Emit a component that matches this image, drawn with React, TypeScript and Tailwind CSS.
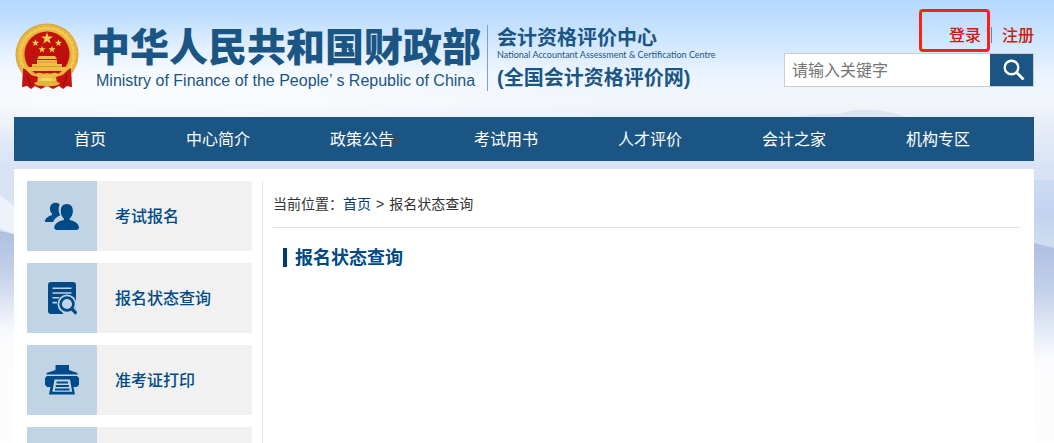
import type { ReactNode } from 'react';

const navItems = ['首页', '中心简介', '政策公告', '考试用书', '人才评价', '会计之家', '机构专区'];

const starPoints = (cx: number, cy: number, r: number) =>
  Array.from({ length: 10 }, (_, i) => {
    const radius = i % 2 ? r * 0.4 : r;
    const a = (Math.PI / 5) * i - Math.PI / 2;
    return `${(cx + radius * Math.cos(a)).toFixed(2)},${(cy + radius * Math.sin(a)).toFixed(2)}`;
  }).join(' ');

function Emblem() {
  return (
    <svg viewBox="0 0 64 68" className="ml-px h-[68px] w-16 shrink-0" aria-hidden="true">
      <defs>
        <radialGradient id="gold" cx="50%" cy="50%" r="50%">
          <stop offset="0.72" stopColor="#e0a62c" />
          <stop offset="0.86" stopColor="#f3cd58" />
          <stop offset="1" stopColor="#d9a235" />
        </radialGradient>
        <linearGradient id="red" x1="0" y1="0" x2="1" y2="1">
          <stop offset="0" stopColor="#c8140f" />
          <stop offset="1" stopColor="#b80d0c" />
        </linearGradient>
      </defs>
      <path d="M8 44 L7 64 L12 63 L16 66 L20 63 L26 66 L32 63 L38 66 L44 63 L48 66 L52 63 L57 64 L56 44 Z" fill="#c3140d" />
      <ellipse cx="32" cy="31.500" rx="31.500" ry="31" fill="url(#gold)" />
      <circle cx="32" cy="31.500" r="28" fill="none" stroke="#dca83a" strokeWidth="1" strokeDasharray="2 3" />
      <circle cx="32" cy="31" r="22.500" fill="url(#red)" />
      <polygon points={starPoints(32, 15.5, 6.2)} fill="#f8cf4d" />
      <polygon points={starPoints(20.5, 20, 3.8)} fill="#f8cf4d" />
      <polygon points={starPoints(43.5, 20, 3.8)} fill="#f8cf4d" />
      <polygon points={starPoints(27, 26.5, 3.8)} fill="#f8cf4d" />
      <polygon points={starPoints(37, 26.5, 3.8)} fill="#f8cf4d" />
      <path d="M24 33h16l2 3H22zM22 37h20v4h5v5H17v-5h5zM13 44h38v4H13z" fill="#f0bd45" />
      <path d="M22 39h20M17 43.500h30" stroke="#d3942a" strokeWidth="0.800" />
      <path d="M8 45c5 2 7 8 12 8l3 1-1 6c-5 1-9-1-14 4zM56 45c-5 2-7 8-12 8l-3 1 1 6c5 1 9-1 14 4z" fill="#c3140d" />
      <path d="M12 52l4 11M52 52l-4 11" stroke="#8f0808" strokeWidth="1" />
      <path d="M21 51c4-3 6 1 11-1 5 2 7-2 11 1-1 4-7 4-11 3-4 1-10 1-11-3z" fill="#edbd43" />
      <path d="M19 60c5-2 8-3 13-2 5-1 8 0 13 2-2 4-8 2-13 4-5-2-11 0-13-4z" fill="#e5b23c" />
      <path d="M26 55.500c4-1.500 8-1.500 12 0l-1 2.500H27z" fill="#f8d760" />
    </svg>
  );
}

function PeopleIcon() {
  return (
    <svg viewBox="0 0 36 32" className="h-8 w-9" fill="#004b87" aria-hidden="true">
      <path d="M11.500 2.800c1.700 0 3.200.6 4.200 1.800-1.700 3.200-1.400 7.600.6 10.600-3.400 1.400-5.800 3.600-7.200 6.800H2c-1 0-1.300-.6-1-1.500 1-3 3.500-4.300 6.600-5.300l.6-1.400C4.500 11 5.200 2.800 11.500 2.800z" />
      <path d="M22.800 4c3.900 0 6.100 2.800 6.100 6.700 0 3.300-1.400 6.300-3.400 8.300l.3 1c5 1 8.400 3.500 9.200 7 .2 2-1 3-2.800 3H13.200c-2 0-3.200-1-3-3 .8-3.500 4.500-6 9.500-7l.4-1c-2-2-3.400-5-3.400-8.300C16.700 6.800 18.900 4 22.800 4z" />
    </svg>
  );
}

function QueryIcon() {
  return (
    <svg viewBox="0 0 30 34" className="h-[34px] w-[30px]" aria-hidden="true">
      <rect x="1" y="1" width="28" height="32" rx="3" fill="#004b87" />
      <path d="M5.500 7.200h19M5.500 12h19M5.500 16.800h6.500M5.500 21.600h4.500" stroke="#c1d4e6" strokeWidth="1.600" />
      <path d="M14 29l10-3 6 2v6H17z" fill="#c1d4e6" />
      <circle cx="20" cy="23" r="9.500" fill="#c1d4e6" />
      <circle cx="20" cy="23" r="6.400" fill="none" stroke="#004b87" strokeWidth="2.700" />
      <path d="M24.500 27.500l5 5" stroke="#004b87" strokeWidth="3.200" />
    </svg>
  );
}

function PrinterIcon() {
  return (
    <svg viewBox="0 0 36 32" className="h-8 w-9" aria-hidden="true">
      <path d="M11.500 1h13.500v5l8.500 3v1.500h-31V9l9-3z" fill="#004b87" />
      <path d="M3 12h30l2 2v6.500L33 23H3l-2-2.500V14z" fill="#004b87" />
      <path d="M8 15h20l3 15.500H5z" fill="#004b87" />
      <path d="M10.500 15.500h15.500l2.200 12.300H8.300z" fill="#c1d4e6" />
      <path d="M12.500 18.500h11.500M11.800 22h13M11 25.400h14.500" stroke="#004b87" strokeWidth="2" />
    </svg>
  );
}

function SearchIcon() {
  return (
    <svg viewBox="0 0 24 24" className="ml-1 size-6" fill="none" aria-hidden="true">
      <path d="M14 15l7 7" stroke="#0d3353" strokeWidth="3" />
      <circle cx="9.500" cy="9.500" r="6.800" stroke="#fff" strokeWidth="2.400" />
      <path d="M14.500 14.500l7 7" stroke="#fff" strokeWidth="3" />
    </svg>
  );
}

function Scenery() {
  return (
    <svg className="absolute inset-0 h-[443px] w-full" viewBox="0 0 1054 443" preserveAspectRatio="none" aria-hidden="true">
      <defs>
        <linearGradient id="sky" x1="0" y1="0" x2="0" y2="1">
          <stop offset="0" stopColor="#b3d8ff" />
          <stop offset="0.080" stopColor="#cbe4ff" />
          <stop offset="0.170" stopColor="#eaf4ff" />
          <stop offset="0.230" stopColor="#f3f6fb" />
          <stop offset="0.300" stopColor="#e3ebf7" />
          <stop offset="0.380" stopColor="#d7e3f5" />
          <stop offset="0.520" stopColor="#dae5f4" />
          <stop offset="0.780" stopColor="#fbfcfe" />
          <stop offset="1" stopColor="#fdfdfd" />
        </linearGradient>
        <radialGradient id="glow">
          <stop offset="0" stopColor="#fff" stopOpacity="0.700" />
          <stop offset="1" stopColor="#fff" stopOpacity="0" />
        </radialGradient>
        <linearGradient id="hill" x1="0" y1="0" x2="0" y2="1">
          <stop offset="0" stopColor="#aebfe0" />
          <stop offset="0.400" stopColor="#c3d0ea" />
          <stop offset="1" stopColor="#fbfcfe" />
        </linearGradient>
        <linearGradient id="haze" x1="0" y1="0" x2="0" y2="1">
          <stop offset="0" stopColor="#ccdbf3" />
          <stop offset="0.500" stopColor="#c3d3ef" />
          <stop offset="1" stopColor="#d0deef" />
        </linearGradient>
        <linearGradient id="ridge" x1="0" y1="0" x2="0" y2="1">
          <stop offset="0" stopColor="#dde4ef" />
          <stop offset="1" stopColor="#dce5f1" />
        </linearGradient>
      </defs>
      <rect width="1054" height="443" fill="url(#sky)" />
      <ellipse cx="180" cy="84" rx="480" ry="66" fill="url(#glow)" />
      <path d="M770 118 C800 117 815 113 840 114 C855 107 885 109 910 118 Z" fill="url(#ridge)" />
      <path d="M0 195 L14 206 L14 234 L0 228 Z" fill="#edf3fb" />
      <path d="M0 231 L14 234 L14 335 L0 325 Z" fill="url(#hill)" />
      <path d="M1034 180 L1054 180 L1054 250 L1034 250 Z" fill="url(#haze)" />
      <path d="M1034 243 L1054 248 L1054 360 L1034 360 Z" fill="url(#hill)" />
    </svg>
  );
}

function SideLink({ icon, label }: { icon: ReactNode; label: string }) {
  return (
    <li>
      <a href="#" className="flex h-[70px] bg-[#f1f1f1]">
        <span className="flex w-[70px] items-center justify-center bg-[#c1d4e6]">{icon}</span>
        <span className="flex items-center pt-px pl-[18px] text-base font-medium text-[#004b87]">{label}</span>
      </a>
    </li>
  );
}

export default function App() {
  return (
    <div className="relative isolate h-screen overflow-hidden bg-[#fdfdfd] font-['Liberation_Sans','Noto_Sans_CJK_SC',sans-serif]">
      <div className="absolute inset-0 -z-10">
        <Scenery />
      </div>
      <div className="pr-5 pl-[14px]">
        <header className="flex h-[117px] justify-between">
          <div className="flex items-start pt-[23px] text-[#1b5583]">
            <Emblem />
            <div className="pl-3 whitespace-nowrap">
              <h1 className="text-[39px] leading-[50px] font-black">中华人民共和国财政部</h1>
              <p className="pl-[5px] text-base leading-4">Ministry of Finance of the People’ s Republic of China</p>
            </div>
            <div className="mt-[2px] ml-[6px] h-[66px] border-l border-[#7d9fc0] pl-[9px] whitespace-nowrap">
              <p className="text-xl leading-[26px] font-bold">会计资格评价中心</p>
              <p className="font-['Lato',sans-serif] text-[9px] leading-2">National Accountant Assessment &amp; Certification Centre</p>
              <p className="pt-[7px] text-xl leading-6 font-bold">(全国会计资格评价网)</p>
            </div>
          </div>
          <div className="w-[250px] pt-[9px]">
            <div className="flex h-[44px] items-center justify-end text-base font-medium text-[#c7220c]">
              <span className="relative pt-[10px]">
                <a href="#">登录</a>
                <span className="pointer-events-none absolute -top-[5px] -right-[9px] h-[43px] w-[71px] rounded border-3 border-[#ff2012]" />
              </span>
              <span className="mx-[10px] mt-2 h-4 w-px bg-[#5e88b0]" />
              <a href="#" className="pt-[10px]">注册</a>
            </div>
            <form className="flex h-[34px] border border-[#cccccc] bg-white">
              <input
                type="text"
                aria-label="请输入关键字"
                placeholder="请输入关键字"
                className="min-w-0 flex-1 pt-[2px] pl-[7px] text-base text-[#333] outline-none placeholder:text-[#757575]"
              />
              <button type="button" aria-label="搜索" className="flex w-[43px] items-center justify-center bg-[#1b5583]">
                <SearchIcon />
              </button>
            </form>
          </div>
        </header>

        <nav className="flex h-[44px] bg-[#1b5583] pt-px pl-5 text-base whitespace-nowrap text-white">
          {navItems.map((item) => (
            <a key={item} href="#" className="flex items-center px-10">
              {item}
            </a>
          ))}
        </nav>

        <div className="mt-2 flex min-h-[400px] bg-white px-[13px] pt-3">
          <aside className="w-[225px] shrink-0">
            <ul className="flex flex-col gap-3">
              <SideLink icon={<PeopleIcon />} label="考试报名" />
              <SideLink icon={<QueryIcon />} label="报名状态查询" />
              <SideLink icon={<PrinterIcon />} label="准考证打印" />
              <SideLink icon={null} label="" />
            </ul>
          </aside>
          <main className="ml-[10px] flex-1 border-l border-[#e4e4e4] pl-[10px]">
            <div className="flex h-[47px] items-center border-b border-[#e4e4e4] text-sm text-[#333]">
              <span>当前位置：</span>
              <a href="#" className="text-[#003a78]">首页</a>
              <span className="px-[5px]">&gt;</span>
              <span>报名状态查询</span>
            </div>
            <div className="mt-5 ml-[10px] flex items-center">
              <span className="h-[19px] w-1 bg-[#003a78]" />
              <h2 className="pl-2 text-lg leading-[18px] font-bold text-[#004b87]">报名状态查询</h2>
            </div>
          </main>
        </div>
      </div>
    </div>
  );
}
